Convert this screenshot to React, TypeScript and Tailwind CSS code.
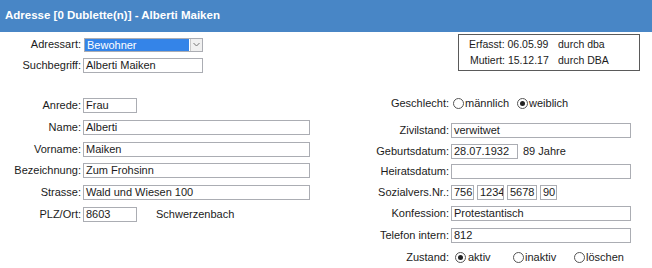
import React from "react";

function Box({ value, w }: { value: string; w: string }) {
  return (
    <div
      className={`${w} h-[15px] border border-[#abadb3] bg-white px-[2px] leading-[13px] whitespace-nowrap overflow-hidden`}
    >
      {value}
    </div>
  );
}

function Radio({ checked }: { checked?: boolean }) {
  return (
    <span className="inline-flex h-[11px] w-[11px] items-center justify-center rounded-full border border-[#555] bg-white">
      {checked && <span className="h-[5px] w-[5px] rounded-full bg-[#222]" />}
    </span>
  );
}

function LeftRow({ label, h, children }: { label: string; h: string; children: React.ReactNode }) {
  return (
    <div className={`flex items-center ${h}`}>
      <div className="w-[83px] whitespace-nowrap pr-[2px] text-right">{label}</div>
      {children}
    </div>
  );
}

function RightRow({ label, h, children }: { label: string; h: string; children: React.ReactNode }) {
  return (
    <div className={`flex items-center ${h}`}>
      <div className="w-[121px] pr-[2px] text-right">{label}</div>
      {children}
    </div>
  );
}

export default function App() {
  return (
    <div className="h-[268px] w-[652px] overflow-hidden bg-white font-['Liberation_Sans',Arial,sans-serif] text-[11px] text-[#1b1b1b]">
      <div className="flex h-[32px] items-center bg-[#4886c6] pl-[5px] text-[11.5px] font-bold text-white">
        Adresse [0 Dublette(n)] - Alberti Maiken
      </div>

      <div className="flex">
        {/* left column */}
        <div className="w-[330px]">
          <div className="mt-[2px]">
            <LeftRow label="Adressart:" h="h-[21px]">
              <div className="ml-[1px] flex h-[14px] w-[119px] items-center border border-[#abadb3] bg-white">
                <div className="h-full flex-1 bg-[#3484e8] pl-[2px] leading-[12px] text-white">Bewohner</div>
                <div className="ml-[1px] flex h-full w-[12px] items-center justify-center border-l border-[#c8c8c8] bg-[#f0f0f0]">
                  <svg width="7" height="5" viewBox="0 0 7 5">
                    <path d="M0.5 1 L3.5 4 L6.5 1" fill="none" stroke="#777" strokeWidth="1" />
                  </svg>
                </div>
              </div>
            </LeftRow>
            <LeftRow label="Suchbegriff:" h="h-[21px]">
              <Box value="Alberti Maiken" w="w-[120px]" />
            </LeftRow>
          </div>

          <div className="mt-[18px]">
            <LeftRow label="Anrede:" h="h-[22px]">
              <Box value="Frau" w="w-[54px]" />
            </LeftRow>
            <LeftRow label="Name:" h="h-[22px]">
              <Box value="Alberti" w="w-[227px]" />
            </LeftRow>
            <LeftRow label="Vorname:" h="h-[22px]">
              <Box value="Maiken" w="w-[227px]" />
            </LeftRow>
            <LeftRow label="Bezeichnung:" h="h-[21px]">
              <Box value="Zum Frohsinn" w="w-[227px]" />
            </LeftRow>
            <LeftRow label="Strasse:" h="h-[22px]">
              <Box value="Wald und Wiesen 100" w="w-[227px]" />
            </LeftRow>
            <LeftRow label="PLZ/Ort:" h="h-[22px]">
              <Box value="8603" w="w-[54px]" />
              <span className="ml-[19px]">Schwerzenbach</span>
            </LeftRow>
          </div>
        </div>

        {/* right column */}
        <div className="flex-1">
          <div className="ml-[128px] mt-[2px] h-[37px] w-[182px] border border-[#5a5a5a] pl-[10px] pt-[2px] text-[10.5px] leading-[15px]">
            <div className="flex">
              <span className="w-[89px] whitespace-nowrap">Erfasst: 06.05.99</span>
              <span className="whitespace-nowrap">durch dba</span>
            </div>
            <div className="mt-[1px] flex">
              <span className="w-[89px] whitespace-nowrap pl-[1px]">Mutiert: 15.12.17</span>
              <span className="whitespace-nowrap">durch DBA</span>
            </div>
          </div>

          <div className="mt-[21px]">
            <RightRow label="Geschlecht:" h="h-[22px]">
              <div className="ml-[2px] flex items-center gap-[1px]">
                <Radio />
                <span>männlich</span>
              </div>
              <div className="ml-[8px] flex items-center gap-[1px]">
                <Radio checked />
                <span>weiblich</span>
              </div>
            </RightRow>
          </div>

          <div className="mt-[6px]">
            <RightRow label="Zivilstand:" h="h-[21px]">
              <Box value="verwitwet" w="w-[180px]" />
            </RightRow>
            <RightRow label="Geburtsdatum:" h="h-[20px]">
              <Box value="28.07.1932" w="w-[67px]" />
              <span className="ml-[5px]">89 Jahre</span>
            </RightRow>
            <RightRow label="Heiratsdatum:" h="h-[20px]">
              <Box value="" w="w-[180px]" />
            </RightRow>
            <RightRow label="Sozialvers.Nr.:" h="h-[22px]">
              <div className="flex gap-[3px]">
                <Box value="756" w="w-[23px]" />
                <Box value="1234" w="w-[27px]" />
                <Box value="5678" w="w-[30px]" />
                <Box value="90" w="w-[17px]" />
              </div>
            </RightRow>
            <RightRow label="Konfession:" h="h-[21px]">
              <Box value="Protestantisch" w="w-[180px]" />
            </RightRow>
            <RightRow label="Telefon intern:" h="h-[22px]">
              <Box value="812" w="w-[180px]" />
            </RightRow>
            <RightRow label="Zustand:" h="h-[22px]">
              <div className="ml-[4px] flex w-[58px] items-center gap-[2px]">
                <Radio checked />
                <span>aktiv</span>
              </div>
              <div className="flex w-[61px] items-center gap-[1px]">
                <Radio />
                <span>inaktiv</span>
              </div>
              <div className="flex items-center gap-[1px]">
                <Radio />
                <span>löschen</span>
              </div>
            </RightRow>
          </div>
        </div>
      </div>
    </div>
  );
}
